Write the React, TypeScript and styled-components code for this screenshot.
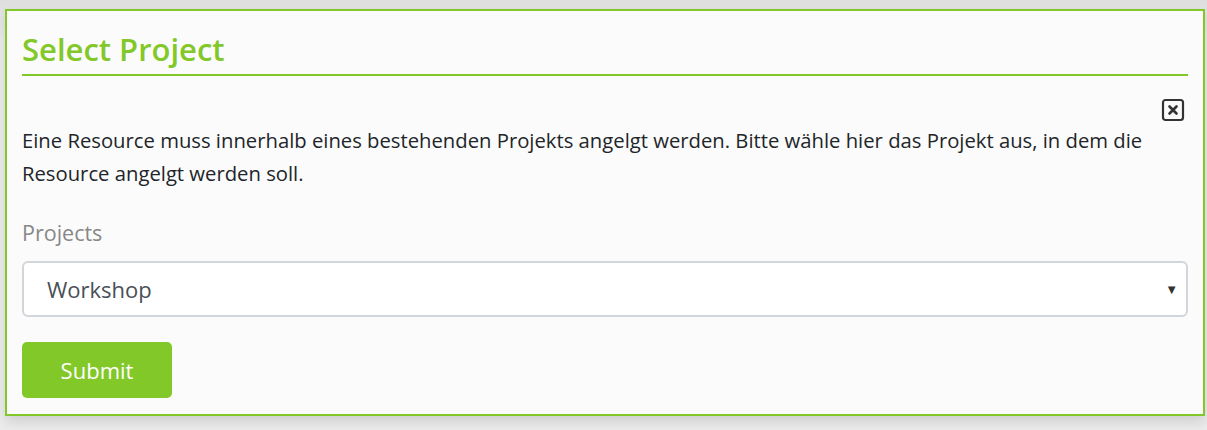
import React from 'react';
import styled, { createGlobalStyle } from 'styled-components';

const GlobalStyle = createGlobalStyle`
  html, body {
    margin: 0;
    padding: 0;
    background: linear-gradient(#dedede, #ececec 40px, #ececec);
    font-family: "Open Sans", "Noto Sans", sans-serif;
  }
`;

const Page = styled.div`
  padding: 9px 2px 16px 5px;
`;

const Panel = styled.div`
  background: #fbfbfb;
  border: 2px solid #82c828;
  padding: 18px 15px 16px 15px;
  box-shadow: 0 6px 12px rgba(0, 0, 0, 0.12);
`;

const Title = styled.h2`
  margin: 0;
  color: #82c828;
  font-size: 31px;
  font-weight: 600;
  line-height: 40px;
  padding-bottom: 5px;
  border-bottom: 2px solid #82c828;
`;

const CloseRow = styled.div`
  display: flex;
  justify-content: flex-end;
  padding: 22px 3px 2px 0;
`;

const CloseButton = styled.button`
  border: 0;
  background: none;
  padding: 0;
  width: 24px;
  height: 24px;
  cursor: pointer;
  color: #333;
  display: flex;
`;

const Text = styled.p`
  margin: 0;
  color: #212529;
  font-size: 20.25px;
  line-height: 33px;
`;

const Label = styled.label`
  display: block;
  margin-top: 26px;
  color: #888;
  font-size: 21.5px;
  line-height: 33px;
`;

const SelectWrap = styled.div`
  position: relative;
  margin-top: 12px;
`;

const Select = styled.select`
  appearance: none;
  box-sizing: border-box;
  width: 100%;
  height: 56px;
  border: 2px solid #d2d5da;
  border-radius: 6px;
  background: #fff;
  padding: 0 40px 0 23px;
  font-family: inherit;
  font-size: 22px;
  color: #495057;
  outline: none;
`;

const Caret = styled.span`
  position: absolute;
  right: 10px;
  top: 50%;
  transform: translateY(-50%);
  font-size: 13px;
  color: #333;
  pointer-events: none;
`;

const Submit = styled.button`
  display: block;
  margin-top: 25px;
  width: 150px;
  height: 56px;
  border: 0;
  border-radius: 5px;
  background: #82c828;
  color: #fff;
  font-family: inherit;
  font-size: 22px;
  cursor: pointer;
`;

export default function App() {
  return (
    <>
      <GlobalStyle />
      <Page>
        <Panel>
          <Title>Select Project</Title>
          <CloseRow>
            <CloseButton aria-label="close">
              <svg width="24" height="24" viewBox="0 0 24 24" fill="none" stroke="currentColor" strokeWidth="2.2" strokeLinecap="round">
                <rect x="2" y="2" width="20" height="20" rx="2.5" />
                <path d="M8.5 8.5l7 7M15.5 8.5l-7 7" strokeWidth="2.6" />
              </svg>
            </CloseButton>
          </CloseRow>
          <Text>
            Eine Resource muss innerhalb eines bestehenden Projekts angelgt werden. Bitte wähle hier das Projekt aus, in dem die Resource angelgt werden soll.
          </Text>
          <Label htmlFor="projects">Projects</Label>
          <SelectWrap>
            <Select id="projects" defaultValue="Workshop">
              <option>Workshop</option>
            </Select>
            <Caret>▼</Caret>
          </SelectWrap>
          <Submit>Submit</Submit>
        </Panel>
      </Page>
    </>
  );
}
